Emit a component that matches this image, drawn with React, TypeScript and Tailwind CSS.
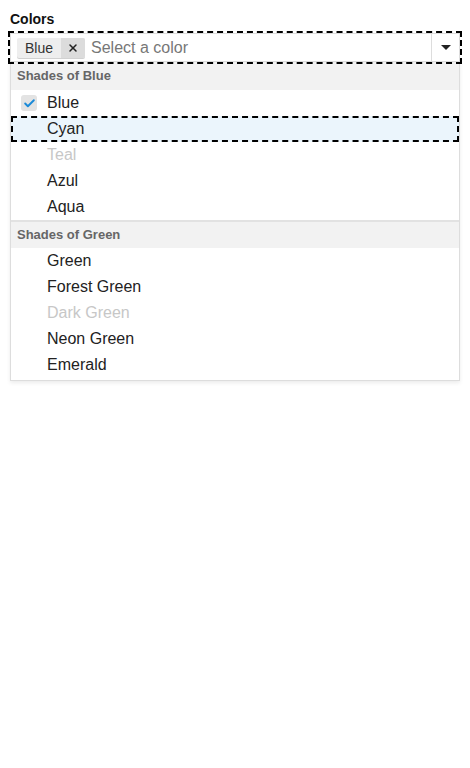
import { Check, X } from "lucide-react";

interface Option {
  label: string;
  selected?: boolean;
  focused?: boolean;
  disabled?: boolean;
}

const groups: { title: string; options: Option[] }[] = [
  {
    title: "Shades of Blue",
    options: [
      { label: "Blue", selected: true },
      { label: "Cyan", focused: true },
      { label: "Teal", disabled: true },
      { label: "Azul" },
      { label: "Aqua" },
    ],
  },
  {
    title: "Shades of Green",
    options: [
      { label: "Green" },
      { label: "Forest Green" },
      { label: "Dark Green", disabled: true },
      { label: "Neon Green" },
      { label: "Emerald" },
    ],
  },
];

const OptionRow = ({ label, selected, focused, disabled }: Option) => {
  return (
    <div
      className={`relative flex items-center h-[26px] pl-[36px] text-base ${
        focused ? "bg-[#ebf5fc] outline-2 outline-dashed outline-black -outline-offset-2" : ""
      } ${disabled ? "text-[#c7c7c7]" : "text-[#222]"}`}
    >
      {selected && (
        <span className="absolute left-[10px] top-[5px] flex h-4 w-4 items-center justify-center rounded-[3px] bg-[#e3e3e3]">
          <Check className="h-[13px] w-[13px] text-[#1a8ad8]" strokeWidth={3.5} />
        </span>
      )}
      {label}
    </div>
  );
};

export default function App() {
  return (
    <div className="p-[10px] font-['Liberation_Sans',Arial,sans-serif]">
      <div className="text-sm font-bold leading-[18px] text-[#111]">Colors</div>
      <div className="mt-[5px] w-[450px]">
        <div className="flex h-[29px] items-center border border-[#ddd] bg-white outline-2 outline-dashed outline-black outline-offset-0">
          <div className="flex flex-1 items-center pl-[6px]">
            <span className="flex h-[20px] items-stretch rounded-[2px] bg-[#eee] text-sm text-[#333] shadow-[0_1px_0_rgba(0,0,0,0.18)]">
              <span className="flex items-center px-2">Blue</span>
              <span className="flex w-6 items-center justify-center rounded-r-[2px] bg-[#dcdcdc]">
                <X className="h-3 w-3 text-[#222]" strokeWidth={3} />
              </span>
            </span>
            <span className="ml-[6px] text-base text-[#777]">Select a color</span>
          </div>
          <div className="flex h-full w-[28px] items-center justify-center border-l border-[#ddd]">
            <span className="h-0 w-0 border-x-[5px] border-t-[5px] border-x-transparent border-t-[#222]" />
          </div>
        </div>
        <div className="border border-t-0 border-[#ddd] bg-white pb-[2px] shadow-[0_2px_4px_rgba(0,0,0,0.08)]">
          {groups.map((g, i) => (
            <div key={g.title} className={i > 0 ? "border-t-2 border-[#e2e2e2]" : ""}>
              <div
                className={`flex items-center bg-[#f2f2f2] pl-[6px] text-[13px] font-bold text-[#666] ${
                  i > 0 ? "h-[26px]" : "h-[28px]"
                }`}
              >
                {g.title}
              </div>
              {g.options.map((o) => (
                <OptionRow key={o.label} {...o} />
              ))}
            </div>
          ))}
        </div>
      </div>
    </div>
  );
}
